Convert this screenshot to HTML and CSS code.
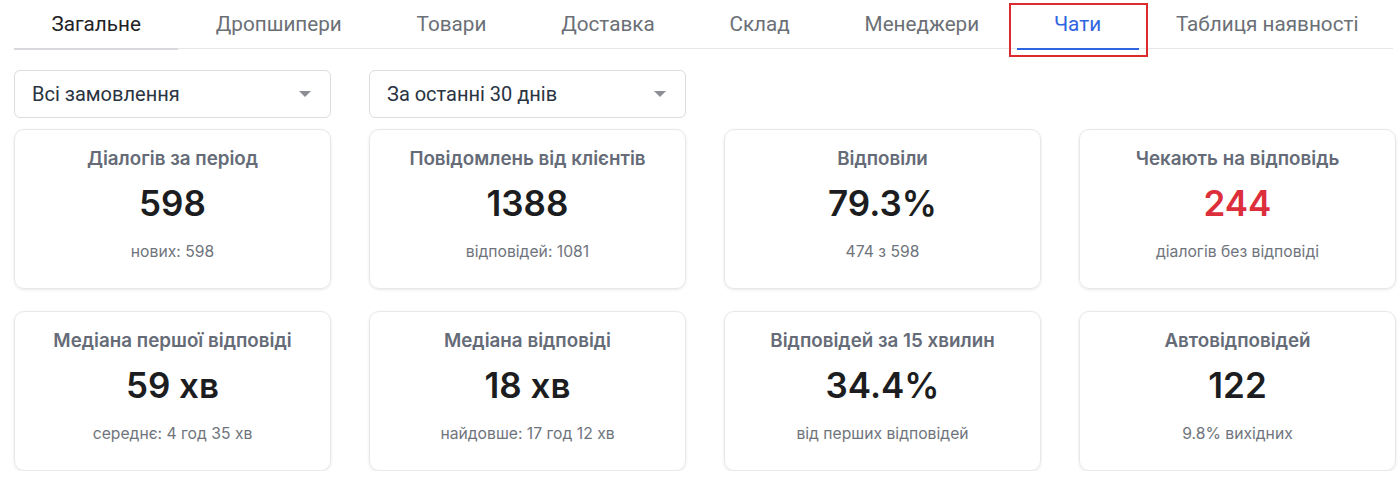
FILE: index.html
```html
<!DOCTYPE html>
<html lang="uk">
<head>
<meta charset="utf-8">
<link rel="stylesheet" href="styles.css">
</head>
<body>
<div class="page">
  <nav class="tabs">
    <div class="tab tab-first">Загальне</div>
    <div class="tab">Дропшипери</div>
    <div class="tab">Товари</div>
    <div class="tab">Доставка</div>
    <div class="tab">Склад</div>
    <div class="tab">Менеджери</div>
    <div class="tab tab-active">Чати<span class="highlight"></span></div>
    <div class="tab">Таблиця наявності</div>
  </nav>

  <div class="filters">
    <div class="select"><span>Всі замовлення</span><span class="caret"></span></div>
    <div class="select"><span>За останні 30 днів</span><span class="caret"></span></div>
  </div>

  <div class="grid">
    <div class="card">
      <div class="card-title">Діалогів за період</div>
      <div class="card-value">598</div>
      <div class="card-sub">нових: 598</div>
    </div>
    <div class="card">
      <div class="card-title">Повідомлень від клієнтів</div>
      <div class="card-value">1388</div>
      <div class="card-sub">відповідей: 1081</div>
    </div>
    <div class="card">
      <div class="card-title">Відповіли</div>
      <div class="card-value">79.3%</div>
      <div class="card-sub">474 з 598</div>
    </div>
    <div class="card">
      <div class="card-title">Чекають на відповідь</div>
      <div class="card-value value-red">244</div>
      <div class="card-sub">діалогів без відповіді</div>
    </div>
    <div class="card">
      <div class="card-title">Медіана першої відповіді</div>
      <div class="card-value">59 хв</div>
      <div class="card-sub">середнє: 4 год 35 хв</div>
    </div>
    <div class="card">
      <div class="card-title">Медіана відповіді</div>
      <div class="card-value">18 хв</div>
      <div class="card-sub">найдовше: 17 год 12 хв</div>
    </div>
    <div class="card">
      <div class="card-title">Відповідей за 15 хвилин</div>
      <div class="card-value">34.4%</div>
      <div class="card-sub">від перших відповідей</div>
    </div>
    <div class="card">
      <div class="card-title">Автовідповідей</div>
      <div class="card-value">122</div>
      <div class="card-sub">9.8% вихідних</div>
    </div>
  </div>
</div>
</body>
</html>
```

FILE: styles.css
```css
* { box-sizing: border-box; }
html, body { margin: 0; padding: 0; background: #fff; }
body { font-family: Roboto, "Noto Sans", sans-serif; }

.page {
  padding: 0 7px 0 14px;
}

.tabs {
  display: flex;
  border-bottom: 1px solid #e6e7ea;
  height: 49px;
}
.tab {
  position: relative;
  padding: 0 37.4px;
  height: 49px;
  line-height: 48px;
  font-size: 20.7px;
  color: #6b6f76;
  white-space: nowrap;
}
.tab-first {
  color: #1f2226;
  border-bottom: 2px solid #d8d9dc;
  margin-bottom: -1px;
  height: 50px;
}
.tab-active {
  color: #2f64e0;
  border-bottom: 2px solid #2f64e0;
  margin-bottom: -1px;
  height: 50px;
}
.highlight {
  position: absolute;
  left: -8px;
  right: -9px;
  top: 3px;
  bottom: -9px;
  border: 2px solid #dc2a2f;
}

.filters {
  display: flex;
  gap: 38px;
  margin-top: 21px;
}
.select {
  width: 317px;
  height: 48px;
  border: 1px solid #dcdde0;
  border-radius: 6px;
  display: flex;
  align-items: center;
  justify-content: space-between;
  padding: 0 19px 0 17px;
  font-size: 20px;
  color: #2a3442;
}
.caret {
  width: 0;
  height: 0;
  border-left: 6px solid transparent;
  border-right: 6px solid transparent;
  border-top: 6px solid #8b8e93;
}

.grid {
  display: grid;
  grid-template-columns: repeat(4, 317px);
  column-gap: 38px;
  row-gap: 22px;
  margin-top: 11px;
  font-family: Inter, "Noto Sans", sans-serif;
}
.card {
  height: 160px;
  border: 1px solid #e7e8eb;
  border-radius: 10px;
  box-shadow: 0 1px 3px rgba(0,0,0,0.09);
  display: flex;
  flex-direction: column;
  align-items: center;
  padding-top: 17px;
}
.card-title {
  font-size: 18.8px;
  font-weight: 600;
  color: #656b77;
  line-height: 24px;
}
.card-value {
  font-size: 35px;
  font-weight: 600;
  color: #1c1d20;
  line-height: 44px;
  margin-top: 10px;
}
.value-red { color: #dc2e3b; }
.card-sub {
  font-size: 15.7px;
  color: #6f747c;
  line-height: 20px;
  margin-top: 17px;
}
```
